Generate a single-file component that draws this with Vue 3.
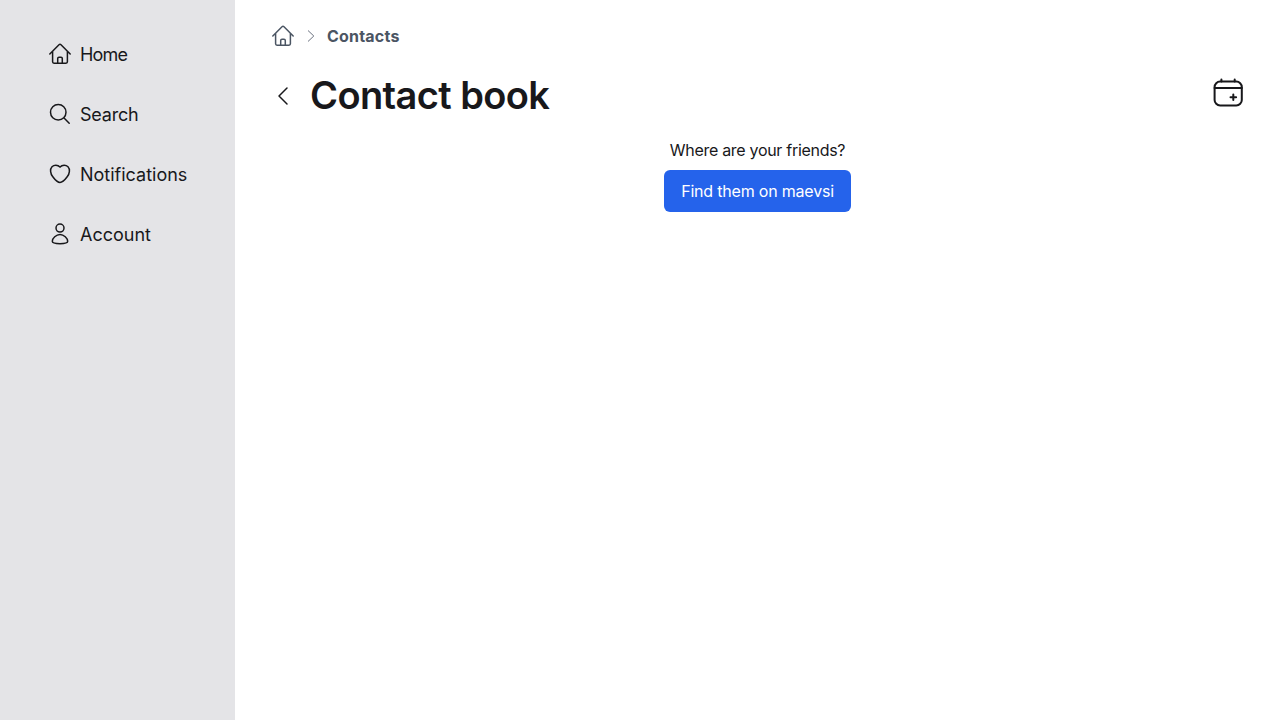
<script setup>
const links = [
  { name: 'Home', icon: 'home' },
  { name: 'Search', icon: 'search' },
  { name: 'Notifications', icon: 'heart' },
  { name: 'Account', icon: 'user' },
]
const icons = {
  home: 'M1.8 12 11 2.8Q12 1.8 13 2.8L22.2 12M4.6 9.4V19.8Q4.6 21.2 6 21.2H18Q19.4 21.2 19.4 19.8V9.4M9.7 21V16.5Q9.7 15.2 11 15.2H13Q14.3 15.2 14.3 16.5V21',
  search: 'M18 10.25A7.75 7.75 0 1 1 2.5 10.25A7.75 7.75 0 0 1 18 10.25ZM15.8 15.8 21.2 21.2',
  heart: 'M12 5.1C14.3 2.5 18 2.7 20 4.7C22.2 7 21.8 11.4 19.2 14.8C17.2 17.5 14 20.5 12 20.5S6.8 17.5 4.8 14.8C2.2 11.4 1.8 7 4 4.7C6 2.7 9.7 2.5 12 5.1Z',
  user: 'M16 6.1A4 4 0 1 1 8 6.1A4 4 0 0 1 16 6.1ZM12 12.5C15.8 12.5 19.7 16.4 19.7 19.3C19.7 20.9 16.2 21.7 12 21.7S4.3 20.9 4.3 19.3C4.3 16.4 8.2 12.5 12 12.5Z',
}
</script>

<template>
  <div class="page">
    <nav class="sidebar">
      <a v-for="link in links" :key="link.name" class="link">
        <svg class="icon" viewBox="0 0 24 24"><path :d="icons[link.icon]" /></svg>
        <span :class="['label', link.icon]">{{ link.name }}</span>
      </a>
    </nav>
    <main>
      <div class="crumbs">
        <svg class="icon" viewBox="0 0 24 24"><path :d="icons.home" /></svg>
        <svg class="separator" viewBox="0 0 16 16"><path d="M5.3 2.8 10.8 8 5.3 13.2" /></svg>
        <span class="current">Contacts</span>
      </div>
      <header>
        <svg class="icon back" viewBox="0 0 24 24"><path d="M16 4 8 12l8 8" /></svg>
        <h1>Contact book</h1>
        <svg class="calendar" viewBox="0 0 36 36">
          <rect x="4.6" y="6.6" width="27.2" height="23.8" rx="5.5" />
          <path d="M4.6 13H31.8M11.4 4.4V6.6M24.7 4.4V6.6M20.5 22.3h5.6M23.3 19.5v5.6" />
        </svg>
      </header>
      <section>
        <p>Where are your friends?</p>
        <button>Find them on maevsi</button>
      </section>
    </main>
  </div>
</template>

<style>
body { margin: 0; background: #fff; }
</style>

<style scoped>
.page { display: flex; height: 720px; font-family: Inter, sans-serif; color: #18181b; overflow: hidden; }
.sidebar { box-sizing: border-box; width: 235px; flex: none; padding: 40px 48px; display: flex; flex-direction: column; gap: 32px; background: #e4e4e7; }
.link { display: flex; align-items: center; gap: 8px; height: 28px; font-size: 18px; line-height: 28px; font-weight: 400; white-space: nowrap; }
.label { padding-top: 2px; }
.label.home { letter-spacing: -0.8px; }
.label.search { letter-spacing: -0.2px; }
.label.heart { letter-spacing: 0; }
.label.user { letter-spacing: 0; }
.icon { width: 24px; height: 24px; flex: none; }
svg { fill: none; stroke: currentColor; stroke-width: 1.5; stroke-linecap: round; stroke-linejoin: round; }
main { flex: 1; padding: 24px 34px 0 36px; }
.crumbs { display: flex; align-items: center; height: 24px; color: #4b5563; }
.separator { width: 16px; height: 16px; margin: 0 8px; stroke-width: 1; color: #6b7280; }
.current { font-size: 16px; line-height: 24px; font-weight: 650; letter-spacing: 0.2px; }
header { display: flex; align-items: center; height: 40px; margin-top: 27px; }
.back { margin-top: 2px; }
h1 { margin: 0 0 0 15px; font-size: 38px; line-height: 40px; font-weight: 600; letter-spacing: -0.6px; white-space: nowrap; }
.calendar { width: 36px; height: 36px; margin: -4px 0 0 auto; stroke-width: 2; }
section { display: flex; flex-direction: column; align-items: center; width: 973px; margin-top: 23px; font-size: 16px; }
p { margin: 0; line-height: 24px; font-weight: 400; letter-spacing: -0.3px; white-space: nowrap; }
button { box-sizing: border-box; width: 187px; height: 42px; margin-top: 8px; padding: 0; border: 0; border-radius: 6px; background: #2563eb; color: #fff; font: inherit; letter-spacing: -0.2px; white-space: nowrap; }
</style>
